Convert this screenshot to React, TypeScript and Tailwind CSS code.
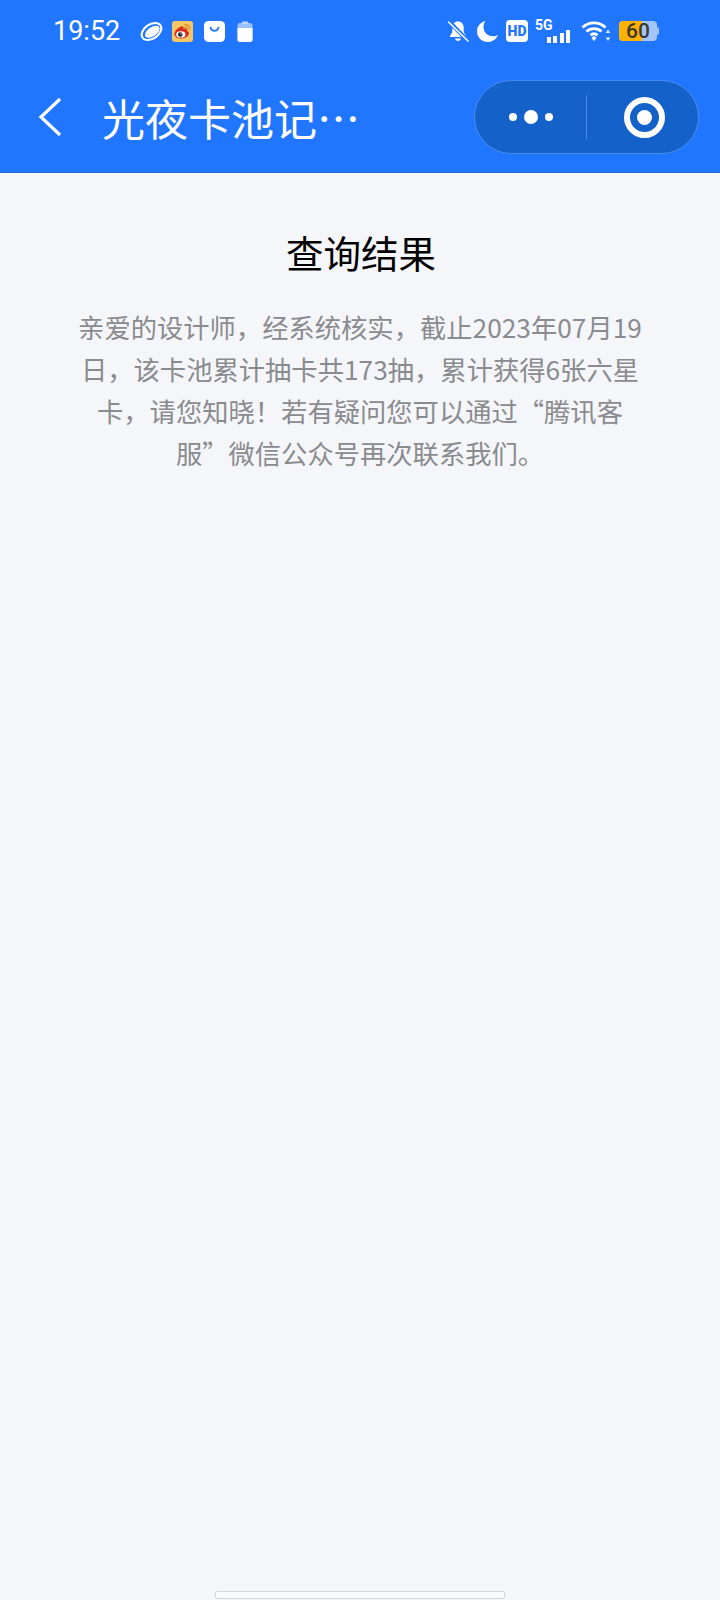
function BallIcon() {
  return (
    <svg width="23" height="21" viewBox="0 0 22 20" className="mr-[9px]">
      <g transform="rotate(-35 11 10)">
        <ellipse cx="11" cy="10" rx="10.4" ry="6.8" fill="none" stroke="#fff" strokeWidth="2" />
        <ellipse cx="11.5" cy="10.6" rx="8" ry="4.3" fill="#fff" />
      </g>
    </svg>
  );
}

function WeiboIcon() {
  return (
    <svg width="21" height="21" viewBox="0 0 21 21" className="mr-[11px]">
      <rect width="21" height="21" rx="3" fill="#f4c766" />
      <path d="M2.5 13c0-3.400 4-7 7-7.600 1.800-.3 2.400 1 1.900 2.600 2.400-.9 4.100-.3 3.500 1.800 1.300.4 2 1.300 2 2.500 0 2.800-3.700 5.200-7.500 5.200S2.500 16 2.500 13z" fill="#d92b1f" />
      <ellipse cx="8.800" cy="13.400" rx="4.600" ry="3.200" fill="#fff" />
      <circle cx="8.300" cy="13.500" r="2.300" fill="#1b1b1b" />
      <circle cx="9" cy="13" r=".7" fill="#fff" />
      <path d="M13 3.500c2.600 0 4.600 2 4.600 4.500M13 6c1.200 0 2.100.9 2.100 2" fill="none" stroke="#e8862a" strokeWidth="1.300" strokeLinecap="round" />
    </svg>
  );
}

function BagIcon() {
  return (
    <svg width="21" height="21" viewBox="0 0 21 21" className="mr-[12px]">
      <rect width="21" height="21" rx="4.500" fill="#fff" />
      <path d="M6.500 6.500c.6 2.300 2.200 3.300 4 3.300s3.400-1 4-3.300" fill="none" stroke="#2176ff" strokeWidth="1.700" strokeLinecap="round" />
    </svg>
  );
}

function SmallBattery() {
  return (
    <svg width="16" height="21" viewBox="0 0 16 21">
      <path d="M5 0.500h6v2H5z" fill="#fff" opacity=".7" />
      <rect x="0.500" y="2" width="15" height="19" rx="2.500" fill="#fff" opacity=".55" />
      <path d="M0.500 7h15v11.500a2.500 2.500 0 0 1-2.500 2.500H3a2.500 2.500 0 0 1-2.500-2.500z" fill="#fff" />
    </svg>
  );
}

function BellOffIcon() {
  return (
    <svg width="22" height="22" viewBox="0 0 22 22" className="mr-[7px]">
      <path d="M11 1.500c3.600 0 5.700 2.700 5.700 6.200v4.300l2.300 4v1H3v-1l2.300-4V7.700C5.300 4.200 7.400 1.500 11 1.500z" fill="#fff" />
      <path d="M8 18.500h6c-.4 1.500-1.600 2.500-3 2.500s-2.600-1-3-2.500z" fill="#fff" />
      <path d="M2 1.500 20.500 20.500" stroke="#2176ff" strokeWidth="4" />
      <path d="M1.500 2 21 21" stroke="#fff" strokeWidth="1.600" strokeLinecap="round" />
    </svg>
  );
}

function MoonIcon() {
  return (
    <svg width="23" height="23" viewBox="0 0 23 23" className="mr-[7px]">
      <path d="M9.500 1C5 2 1 5.800 1 11.300 1 17.500 5.800 22 11.700 22c4.800 0 8.800-3 10.300-7.300-1.500 1-3.300 1.500-5.200 1.500-5.300 0-9.300-4-9.300-9.200C7.500 4.800 8.200 2.700 9.500 1z" fill="#fff" />
    </svg>
  );
}

function WifiIcon() {
  return (
    <svg width="30" height="22" viewBox="0 0 30 22" className="mr-[8px]">
      <path d="M1.500 7.500C8 1.300 18 1.300 24.500 7.500" fill="none" stroke="#fff" strokeWidth="2.800" />
      <path d="M5.500 11.500c4.300-3.900 10.700-3.900 15 0" fill="none" stroke="#fff" strokeWidth="2.800" />
      <path d="M9.500 15.300c2.200-1.900 4.800-1.900 7 0" fill="none" stroke="#fff" strokeWidth="2.800" />
      <path d="M10.500 18 13 15.800 15.500 18 13 21z" fill="#fff" />
      <path d="M27 9.500l2.300 3.500h-4.600zM27 21l-2.300-3.500h4.600z" fill="#fff" opacity=".85" />
    </svg>
  );
}

function SignalBars() {
  return (
    <div className="flex items-end gap-[2.500px] h-[13px]">
      <div className="w-[4px] h-[6px] bg-white" />
      <div className="w-[4px] h-[7px] bg-white" />
      <div className="w-[4px] h-[10px] bg-white" />
      <div className="w-[4px] h-[13px] bg-white" />
    </div>
  );
}

function StatusBar() {
  return (
    <div className="h-[60px] flex items-center pl-[53px] pr-[60px] pt-[2px] justify-between">
      <div className="flex items-center">
        <span className="text-[27px] leading-none text-white w-[87px] font-[Roboto,sans-serif]">19:52</span>
        <BallIcon />
        <WeiboIcon />
        <BagIcon />
        <SmallBattery />
      </div>
      <div className="flex items-center">
        <BellOffIcon />
        <MoonIcon />
        <div className="w-[22px] h-[22px] rounded-[4px] bg-white flex items-center justify-center mr-[9px]">
          <span className="text-[14px] leading-none font-black text-[#2176ff] font-[Roboto,sans-serif]">HD</span>
        </div>
        <div className="relative w-[35px] h-[23px] mr-[9px]">
          <span className="absolute -left-[2px] -top-[2px] text-[14px] leading-none font-bold text-white font-[Roboto,sans-serif]">5G</span>
          <div className="absolute right-[2px] bottom-0">
            <SignalBars />
          </div>
        </div>
        <WifiIcon />
        <div className="flex items-center mr-[1px]">
          <div className="w-[38px] h-[20px] rounded-[4px] bg-[#a3c5fb] relative flex items-center justify-center">
            <div className="absolute inset-y-0 left-0 w-[23px] rounded-l-[4px] bg-[#ffb300]" />
            <span className="relative text-[21px] leading-none font-medium text-[#3a3a30] font-[Roboto,sans-serif]">60</span>
          </div>
          <div className="w-[2px] h-[8px] rounded-r-[2px] bg-[#a3c5fb]" />
        </div>
      </div>
    </div>
  );
}

function NavBar() {
  return (
    <div className="h-[112px] flex items-center pl-[38px] pr-[21px] pt-[2px]">
      <svg width="24" height="40" viewBox="0 0 24 40" className="mr-[40px]">
        <path d="M22 2 3 20 22 38" fill="none" stroke="#fff" strokeWidth="3.200" />
      </svg>
      <div className="flex-1 text-[43px] leading-none text-white font-['Noto_Sans_CJK_SC',sans-serif]">光夜卡池记…</div>
      <div className="w-[225px] h-[74px] rounded-full bg-[#1461c9] border border-[#4a8cec] flex items-center">
        <div className="flex-1 flex items-center justify-center gap-[7px]">
          <div className="w-[8px] h-[8px] rounded-full bg-white" />
          <div className="w-[14px] h-[14px] rounded-full bg-white" />
          <div className="w-[8px] h-[8px] rounded-full bg-white" />
        </div>
        <div className="w-px h-[44px] bg-[#4a8cec]" />
        <div className="w-[111px] pl-[3px] flex items-center justify-center">
          <div className="w-[41px] h-[41px] rounded-full border-[6px] border-white flex items-center justify-center">
            <div className="w-[15px] h-[15px] rounded-full bg-white" />
          </div>
        </div>
      </div>
    </div>
  );
}

export default function App() {
  return (
    <div className="w-[720px] h-[1600px] flex flex-col bg-[#f5f6fa] font-['Noto_Sans_CJK_SC',sans-serif]">
      <div className="h-[173px] bg-[#2176ff] border-b border-[#1f6fef]">
        <StatusBar />
        <NavBar />
      </div>
      <div className="flex-1 flex flex-col items-center pt-[54px] px-[76px]">
        <h1 className="text-[37.500px] leading-[50px] text-black ml-[2px]">查询结果</h1>
        <p className="mt-[29px] text-[26.300px] leading-[42px] text-[#8a8b8f] text-center">
          {"亲爱的设计师\uFF0C经系统核实\uFF0C截止2023年07月19日\uFF0C该卡池累计抽卡共173抽\uFF0C累计获得6张六星卡\uFF0C请您知晓\uFF01若有疑问您可以通过\u201C腾讯客服\u201D微信公众号再次联系我们\u3002"}
        </p>
      </div>
      <div className="h-[8px] mb-[1px] mx-auto w-[290px] rounded-[2px] bg-[#f8f9fd] border border-[#d4d5d9]" />
    </div>
  );
}
